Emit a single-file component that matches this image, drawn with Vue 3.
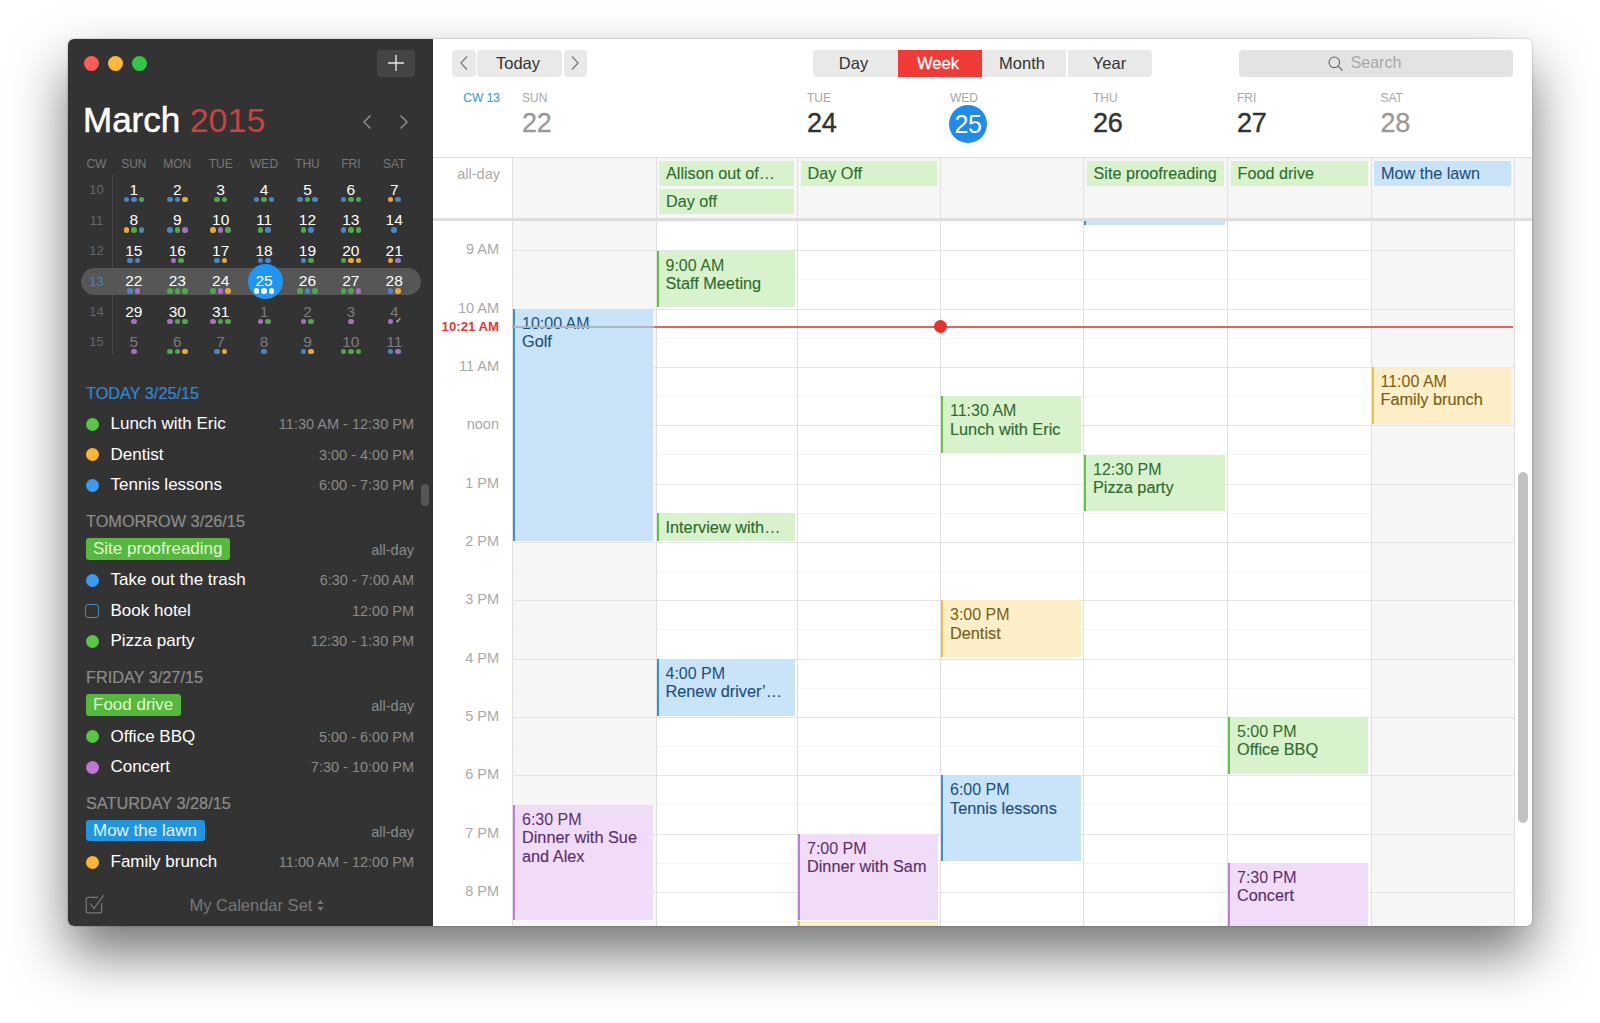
<template>
  <div class="page">
    <div class="window">
      <aside class="sidebar">
        <div class="titlebar">
          <span class="light red"></span>
          <span class="light yellow"></span>
          <span class="light green"></span>
          <button class="add">
            <svg width="16" height="16" viewBox="0 0 16 16"><path d="M8 0v16M0 8h16" stroke="#e6e6e6" stroke-width="1.4" fill="none" /></svg>
          </button>
        </div>
        <div class="month-row">
          <div class="month"><b>March</b> <span>2015</span></div>
          <div class="month-nav">
            <svg width="10" height="16" viewBox="0 0 10 16"><path d="M8.5 1.5 2 8l6.500 6.500" stroke="#8a8a8a" stroke-width="1.6" fill="none" /></svg>
            <svg width="10" height="16" viewBox="0 0 10 16"><path d="M1.500 1.500 8 8l-6.500 6.500" stroke="#8a8a8a" stroke-width="1.600" fill="none" /></svg>
          </div>
        </div>
        <div class="cal">
          <div class="cal-head">
            <span v-for="d in miniHead" :key="d">{{ d }}</span>
          </div>
          <div class="weeks">
            <div v-for="w in weeks" :key="w.cw" class="week" :class="{ current: w.cw === 13 }">
              <span class="cw">{{ w.cw }}</span>
              <div v-for="d in w.days" :key="d[0] + d[1]" class="cell" :class="{ muted: d[2], today: d[0] === 25 }">
                <span class="n">{{ d[0] }}</span>
                <span class="dots">
                  <i v-for="(c, i) in d[1]" :key="i" :class="'d-' + c"></i>
                </span>
              </div>
            </div>
          </div>
        </div>
        <div class="agenda">
          <section v-for="s in agenda" :key="s.head" class="sec">
            <h4 :class="{ now: s.today }">{{ s.head }}</h4>
            <div v-for="r in s.rows" :key="r.title" class="row">
              <span v-if="r.pill" class="pill" :class="r.pill">{{ r.title }}</span>
              <template v-else>
                <span class="marker" :class="r.kind"></span>
                <span class="row-title">{{ r.title }}</span>
              </template>
              <span class="row-time">{{ r.time }}</span>
            </div>
          </section>
        </div>
        <div class="side-foot">
          <svg class="tasks" width="22" height="22" viewBox="0 0 20 20" fill="none" stroke="#787878" stroke-width="1.100">
            <path d="M16 9v7.500a1.500 1.500 0 0 1-1.500 1.500h-11A1.500 1.500 0 0 1 2 16.500v-11A1.500 1.500 0 0 1 3.500 4H13" />
            <path d="M5.500 9.500 9 14l9-12" />
          </svg>
          <span class="set">My Calendar Set</span>
          <svg width="7" height="11" viewBox="0 0 7 11"><path d="M3.500 0 6.500 4H.5zM3.500 11 .5 7h6z" fill="#787878" /></svg>
        </div>
        <div class="side-thumb"></div>
      </aside>

      <main class="main">
        <div class="toolbar">
          <div class="nav">
            <button class="btn arrow">
              <svg width="8" height="14" viewBox="0 0 8 14"><path d="M7 .5.9 7 7 13.500" stroke="#777" stroke-width="1.200" fill="none" /></svg>
            </button>
            <button class="btn today-btn">Today</button>
            <button class="btn arrow">
              <svg width="8" height="14" viewBox="0 0 8 14"><path d="M1 .5 7.100 7 1 13.500" stroke="#777" stroke-width="1.200" fill="none" /></svg>
            </button>
          </div>
          <div class="tabs">
            <button class="tab">Day</button>
            <button class="tab active">Week</button>
            <button class="tab">Month</button>
            <button class="tab year">Year</button>
          </div>
          <div class="search">
            <svg width="15" height="15" viewBox="0 0 15 15" fill="none" stroke="#666" stroke-width="1.100">
              <circle cx="6.300" cy="6.300" r="5.300" />
              <path d="m10.200 10.200 4.300 4.300" />
            </svg>
            <span>Search</span>
          </div>
        </div>

        <div class="head grid-cols">
          <div class="cw-label">CW 13</div>
          <div v-for="d in days" :key="d.name" class="day-head" :class="{ off: d.off, cur: d.cur }">
            <template v-if="d.name">
              <div class="dn">{{ d.name }}</div>
              <div class="dnum">{{ d.num }}</div>
            </template>
          </div>
        </div>

        <div class="allday grid-cols">
          <div class="allday-label">all-day</div>
          <div v-for="(col, i) in allDay" :key="i" class="allday-col">
            <div v-for="c in col" :key="c.t" class="chip" :class="c.c">{{ c.t }}</div>
          </div>
        </div>

        <div class="body">
          <div class="timeline grid-cols">
            <div class="gutter">
              <div v-for="h in hours" :key="h" class="hour-label">{{ h }}</div>
              <div class="now-label">10:21 AM</div>
            </div>
            <div v-for="(col, i) in timed" :key="i" class="day-col" :class="{ weekend: i === 0 || i === 6 }">
              <div v-for="e in col" :key="e.start" class="event" :class="e.c" :style="place(e)">
                <div v-if="e.time" class="ev-time">{{ e.time }}</div>
                <div v-if="e.title" class="ev-title" :class="{ nowrap: !e.wrap, solo: !e.time }">{{ e.title }}</div>
              </div>
            </div>
            <div class="now-line">
              <span class="past"></span>
              <span class="ahead"><i></i></span>
            </div>
          </div>
          <div class="scroll-thumb"></div>
        </div>
      </main>
    </div>
  </div>
</template>

<script setup>
const HOUR = 58.33
const FIRST = 8

const miniHead = ['CW', 'SUN', 'MON', 'TUE', 'WED', 'THU', 'FRI', 'SAT']

const weeks = [
  { cw: 10, days: [[1, 'bbg'], [2, 'bbo'], [3, 'gg'], [4, 'bgb'], [5, 'bgb'], [6, 'bgg'], [7, 'ob']] },
  { cw: 11, days: [[8, 'ogb'], [9, 'bgp'], [10, 'opg'], [11, 'gb'], [12, 'gb'], [13, 'bgg'], [14, 'b']] },
  { cw: 12, days: [[15, 'bb'], [16, 'pg'], [17, 'bo'], [18, 'bb'], [19, 'bg'], [20, 'goo'], [21, 'op']] },
  { cw: 13, days: [[22, 'bp'], [23, 'ggg'], [24, 'gpo'], [25, 'www'], [26, 'gbg'], [27, 'ggp'], [28, 'bo']] },
  { cw: 14, days: [[29, 'p'], [30, 'pgg'], [31, 'pgg'], [1, 'pg', true], [2, 'pg', true], [3, 'p', true], [4, 'pc', true]] },
  { cw: 15, days: [[5, 'p', true], [6, 'ggo', true], [7, 'bo', true], [8, 'b', true], [9, 'bo', true], [10, 'ggg', true], [11, 'bp', true]] },
]

const agenda = [
  {
    head: 'TODAY 3/25/15',
    today: true,
    rows: [
      { title: 'Lunch with Eric', time: '11:30 AM - 12:30 PM', kind: 'green' },
      { title: 'Dentist', time: '3:00 - 4:00 PM', kind: 'orange' },
      { title: 'Tennis lessons', time: '6:00 - 7:30 PM', kind: 'blue' },
    ],
  },
  {
    head: 'TOMORROW 3/26/15',
    rows: [
      { title: 'Site proofreading', time: 'all-day', pill: 'p-green' },
      { title: 'Take out the trash', time: '6:30 - 7:00 AM', kind: 'blue' },
      { title: 'Book hotel', time: '12:00 PM', kind: 'task' },
      { title: 'Pizza party', time: '12:30 - 1:30 PM', kind: 'green' },
    ],
  },
  {
    head: 'FRIDAY 3/27/15',
    rows: [
      { title: 'Food drive', time: 'all-day', pill: 'p-green' },
      { title: 'Office BBQ', time: '5:00 - 6:00 PM', kind: 'green' },
      { title: 'Concert', time: '7:30 - 10:00 PM', kind: 'purple' },
    ],
  },
  {
    head: 'SATURDAY 3/28/15',
    rows: [
      { title: 'Mow the lawn', time: 'all-day', pill: 'p-blue' },
      { title: 'Family brunch', time: '11:00 AM - 12:00 PM', kind: 'orange' },
    ],
  },
]

const days = [
  { name: 'SUN', num: 22, off: true },
  { name: '', num: '' },
  { name: 'TUE', num: 24 },
  { name: 'WED', num: 25, cur: true },
  { name: 'THU', num: 26 },
  { name: 'FRI', num: 27 },
  { name: 'SAT', num: 28, off: true },
]

const allDay = [
  [],
  [{ t: 'Allison out of…', c: 'green' }, { t: 'Day off', c: 'green' }],
  [{ t: 'Day Off', c: 'green' }],
  [],
  [{ t: 'Site proofreading', c: 'green' }],
  [{ t: 'Food drive', c: 'green' }],
  [{ t: 'Mow the lawn', c: 'blue' }],
]

const hours = ['9 AM', '10 AM', '11 AM', 'noon', '1 PM', '2 PM', '3 PM', '4 PM', '5 PM', '6 PM', '7 PM', '8 PM']

const timed = [
  [
    { start: 10, end: 14, c: 'blue', time: '10:00 AM', title: 'Golf' },
    { start: 18.5, end: 20.5, c: 'purple', time: '6:30 PM', title: 'Dinner with Sue and Alex', wrap: true },
  ],
  [
    { start: 9, end: 10, c: 'green', time: '9:00 AM', title: 'Staff Meeting' },
    { start: 13.5, end: 14, c: 'green', title: 'Interview with…' },
    { start: 16, end: 17, c: 'blue', time: '4:00 PM', title: 'Renew driver’…' },
  ],
  [
    { start: 19, end: 20.5, c: 'purple', time: '7:00 PM', title: 'Dinner with Sam' },
    { start: 20.5, end: 21.5, c: 'yellow' },
  ],
  [
    { start: 11.5, end: 12.5, c: 'green', time: '11:30 AM', title: 'Lunch with Eric' },
    { start: 15, end: 16, c: 'yellow', time: '3:00 PM', title: 'Dentist' },
    { start: 18, end: 19.5, c: 'blue', time: '6:00 PM', title: 'Tennis lessons' },
  ],
  [
    { start: 7.5, end: 8.58, c: 'blue' },
    { start: 12.5, end: 13.5, c: 'green', time: '12:30 PM', title: 'Pizza party' },
  ],
  [
    { start: 17, end: 18, c: 'green', time: '5:00 PM', title: 'Office BBQ' },
    { start: 19.5, end: 22, c: 'purple', time: '7:30 PM', title: 'Concert' },
  ],
  [
    { start: 11, end: 12, c: 'yellow', time: '11:00 AM', title: 'Family brunch' },
  ],
]

const place = (e) => ({
  top: `${(e.start - FIRST) * HOUR}px`,
  height: `${(e.end - e.start) * HOUR - 1.5}px`,
})
</script>

<style>
html, body {
  margin: 0;
  background: #fff;
  overflow: hidden;
}
</style>

<style scoped>
.page {
  box-sizing: border-box;
  width: 1600px;
  height: 1023px;
  padding: 39px 0 0 68px;
  overflow: hidden;
  font-family: "Liberation Sans", Arial, sans-serif;
}

.window {
  position: relative;
  display: flex;
  width: 1464px;
  height: 887px;
  border-radius: 6px;
  overflow: hidden;
  background: #fff;
}

.page::before {
  content: "";
  position: absolute;
  left: 68px;
  top: 39px;
  width: 1464px;
  height: 887px;
  border-radius: 6px;
  box-shadow: 0 28px 55px rgba(0, 0, 0, 0.55), 0 0 2px rgba(0, 0, 0, 0.35);
}

/* sidebar */
.sidebar {
  position: relative;
  display: flex;
  flex-direction: column;
  flex: 0 0 365px;
  background: #333;
  color: #fff;
}
.sidebar > * {
  flex-shrink: 0;
}

.titlebar {
  display: flex;
  align-items: center;
  gap: 9px;
  height: 26.5px;
  margin-top: 11px;
  padding: 0 18px 0 16px;
}

.light {
  width: 15px;
  height: 15px;
  border-radius: 50%;
}
.light.red { background: #fc5b57; }
.light.yellow { background: #fdb93a; }
.light.green { background: #32c648; }

.add {
  display: flex;
  align-items: center;
  justify-content: center;
  width: 38px;
  height: 26.5px;
  margin-left: auto;
  padding: 0;
  border: 0;
  border-radius: 4px;
  background: #444;
}

.month-row {
  display: flex;
  align-items: center;
  justify-content: space-between;
  height: 50px;
  margin-top: 18.5px;
  padding: 0 24px 0 15px;
}

.month {
  font-size: 34px;
  line-height: 40px;
}
.month b {
  font-size: 35px;
  font-weight: 400;
  -webkit-text-stroke: 0.5px #fff;
}
.month span {
  color: #c9423e;
}

.month-nav {
  display: flex;
  gap: 27px;
  margin-top: 4px;
}

.cal {
  margin: 8.7px 12px 0 12.7px;
}

.cal-head,
.week {
  display: grid;
  grid-template-columns: 31.500px repeat(7, 43.4px);
  align-items: center;
}

.cal-head {
  height: 20px;
  font-size: 12px;
  color: #777;
  text-align: center;
}

.weeks {
  position: relative;
  margin-top: 1.1px;
}
.weeks::before {
  content: "";
  position: absolute;
  left: 31px;
  top: 0;
  bottom: 2px;
  width: 1px;
  background: #454545;
}

.week {
  position: relative;
  height: 30.4px;
  text-align: center;
}
.week.current {
  height: 27px;
  margin: 1.7px 0;
  border-radius: 14px;
  background: #565656;
}

.cw {
  font-size: 13px;
  color: #666;
}
.current .cw {
  color: #3d87b8;
}

.cell {
  position: relative;
  display: flex;
  align-items: center;
  justify-content: center;
  height: 100%;
  font-size: 15.500px;
}
.cell .n {
  position: relative;
}
.cell.muted {
  color: #7b7b7b;
}
.cell.today::before {
  content: "";
  position: absolute;
  left: 5.200px;
  top: -4px;
  width: 35px;
  height: 35px;
  border-radius: 50%;
  background: #1f96f3;
}

.dots {
  position: absolute;
  left: 0;
  right: 0;
  top: calc(50% + 7px);
  display: flex;
  justify-content: center;
  gap: 2px;
}
.dots i {
  width: 5.500px;
  height: 5.500px;
  border-radius: 50%;
}
.d-b { background: #4a86c2; }
.d-g { background: #4fa84a; }
.d-o { background: #e6a93a; }
.d-p { background: #a870c2; }
.d-w { background: #fff; }
.d-c { position: relative; }
.d-c::after {
  content: "✓";
  position: absolute;
  left: 0;
  top: -2px;
  font: normal 8px/8px "DejaVu Sans", sans-serif;
  color: #fff;
}

.agenda {
  margin-top: 26.300px;
  padding: 0 19px 0 17px;
}

.sec {
  margin-bottom: 10.600px;
}
.sec:last-child {
  margin-bottom: 0;
}

.sec h4 {
  margin: 0 0 3.500px 1px;
  font-size: 16.300px;
  font-weight: 400;
  line-height: 20px;
  color: #8c8c8c;
  -webkit-text-stroke: 0.2px currentColor;
}
.sec h4.now {
  margin-bottom: 5.700px;
  color: #2f88d8;
}

.row {
  display: flex;
  align-items: center;
  height: 30.500px;
}

.marker {
  flex: none;
  box-sizing: border-box;
  width: 13px;
  height: 13px;
  margin: 0 12px 0 0.500px;
  border-radius: 50%;
}
.marker.green { background: #5ac544; }
.marker.orange { background: #fbb635; }
.marker.blue { background: #3a9bf2; }
.marker.purple { background: #c273d8; }
.marker.task {
  width: 14px;
  height: 14px;
  margin: 0 11.500px 0 0;
  border: 1.500px solid #4a90c8;
  border-radius: 3px;
}

.row-title {
  font-size: 17px;
}

.row-time {
  margin-left: auto;
  font-size: 14.500px;
  color: #8a8a8a;
}

.pill {
  display: inline-flex;
  align-items: center;
  height: 21.500px;
  margin: -2px 0 0 1px;
  padding: 0 8px 0 7px;
  border-radius: 3px;
  font-size: 17px;
}
.p-green {
  background: #55b93c;
  color: #e4f7d8;
}
.p-blue {
  background: #2196e0;
  color: #e4f3ff;
}

.side-foot {
  display: flex;
  align-items: center;
  height: 42px;
  margin-top: auto;
  padding-left: 16px;
  color: #777;
}
.tasks {
  margin-top: -2px;
}
.set {
  margin: 0 5px 0 83.500px;
  font-size: 16.500px;
}

.side-thumb {
  position: absolute;
  left: 352.500px;
  top: 445px;
  width: 8px;
  height: 22px;
  border-radius: 4px;
  background: #555;
}

/* main */
.main {
  display: flex;
  flex-direction: column;
  flex: 1;
  min-width: 0;
  color: #333;
}

.toolbar {
  display: flex;
  flex: none;
  height: 26.500px;
  margin-top: 11px;
  padding: 0 19px;
}

.nav {
  display: flex;
  gap: 1.500px;
}

.btn,
.tab {
  height: 100%;
  padding: 0;
  border: 0;
  background: #e9e9e9;
  font: 16.500px "Liberation Sans", Arial, sans-serif;
  color: #333;
}
.btn {
  border-radius: 4px;
}
.arrow {
  display: flex;
  align-items: center;
  justify-content: center;
  width: 23.500px;
}
.today-btn {
  width: 85px;
  padding-right: 3px;
}

.tabs {
  display: flex;
  margin-left: 226px;
  border-radius: 4px;
  overflow: hidden;
}
.tab {
  width: 84px;
  padding-right: 4px;
}
.tab:first-child {
  width: 85px;
}
.tab.active {
  background: #f03a35;
  color: #fff;
  -webkit-text-stroke: 0.3px #fff;
}
.tab.year {
  margin-left: 1.500px;
  padding-right: 0;
}

.search {
  display: flex;
  align-items: center;
  justify-content: center;
  box-sizing: border-box;
  gap: 8px;
  width: 274px;
  margin-left: auto;
  padding-right: 23px;
  border-radius: 4px;
  background: #e3e3e3;
  font-size: 16px;
  color: #a8a8a8;
}

.grid-cols {
  display: grid;
  grid-template-columns: 79px 143.500px 141.500px 143px 143px 144px 143.500px 144px 1fr;
}

.head {
  flex: none;
  height: 81.500px;
  border-bottom: 1px solid #dcdcdc;
  box-sizing: border-box;
}

.cw-label {
  padding: 14.500px 12px 0 0;
  font-size: 12px;
  line-height: 14px;
  text-align: right;
  color: #46a5d8;
  -webkit-text-stroke: 0.2px #46a5d8;
}

.day-head {
  padding: 14.500px 0 0 10px;
}
.dn {
  font-size: 12px;
  line-height: 14px;
  color: #a8a8a8;
}
.dnum {
  margin-top: 3.200px;
  font-size: 27px;
  line-height: 30px;
  letter-spacing: -0.3px;
  color: #333;
  -webkit-text-stroke: 0.4px currentColor;
}
.day-head.off .dnum {
  color: #999;
  -webkit-text-stroke: 0.3px currentColor;
}
.day-head.cur .dnum {
  width: 38px;
  height: 38px;
  margin: 0 0 0 -1px;
  border-radius: 50%;
  background: #1f8bea;
  font-size: 25px;
  line-height: 38px;
  text-align: center;
  color: #fff;
  -webkit-text-stroke: 0;
}

.allday {
  flex: none;
  box-sizing: border-box;
  height: 62.500px;
  border-bottom: 3px solid #dedede;
  background: linear-gradient(to right, #fff 79px, #f6f6f6 79px);
}
.allday-label {
  padding: 8px 12px 0 0;
  font-size: 14.500px;
  line-height: 16px;
  text-align: right;
  color: #aaa;
}
.allday-col {
  display: flex;
  flex-direction: column;
  gap: 2.700px;
  padding: 3px 3px 0 2.500px;
  border-left: 1px solid #e0e0e0;
  min-width: 0;
}
.allday-col:last-child {
  border-right: 1px solid #e0e0e0;
}
.chip {
  height: 25.300px;
  padding-left: 7px;
  font-size: 16.200px;
  line-height: 25.300px;
  white-space: nowrap;
  overflow: hidden;
  -webkit-text-stroke: 0.1px currentColor;
}

.green { background: #d8f2cd; color: #2f6b2c; }
.blue { background: #c9e4f9; color: #1d4f7d; }
.yellow { background: #fcefc8; color: #7a5d14; }
.purple { background: #f0dcf6; color: #5b2f6c; }

.body {
  position: relative;
  flex: 1;
  min-height: 0;
  overflow: hidden;
}

.timeline {
  position: relative;
  height: 758px;
  margin-top: -28.330px;
}

.gutter {
  position: relative;
  padding-top: 28.300px;
}
.hour-label {
  height: 58.330px;
  padding-right: 13px;
  font-size: 14.500px;
  line-height: 58.330px;
  text-align: right;
  color: #aaa;
}
.now-label {
  position: absolute;
  right: 13px;
  top: 126px;
  font-size: 13.200px;
  font-weight: 700;
  line-height: 18px;
  color: #e23b36;
}

.day-col {
  position: relative;
  border-left: 1px solid #dfdfdf;
  background-image: repeating-linear-gradient(
    to bottom,
    #e4e4e4 0,
    #e4e4e4 1px,
    transparent 1px,
    transparent 29.160px,
    #f5f5f5 29.160px,
    #f5f5f5 30.160px,
    transparent 30.160px,
    transparent 58.330px
  );
}
.day-col:nth-last-child(2) {
  border-right: 1px solid #dfdfdf;
}
.day-col.weekend {
  background-color: #f6f6f6;
}

.event {
  position: absolute;
  left: 0;
  right: 2.500px;
  box-sizing: border-box;
  padding: 6px 2px 0 7px;
  border-left: 2.500px solid;
  font-size: 16px;
  line-height: 18.700px;
  overflow: hidden;
}
.event.green { border-left-color: #66c04a; }
.event.blue { border-left-color: #3f92c8; }
.event.yellow { border-left-color: #edc050; }
.event.purple { border-left-color: #bb7ed2; }

.ev-title {
  margin-top: -1.500px;
  font-size: 16.300px;
  -webkit-text-stroke: 0.15px currentColor;
}
.ev-title.solo {
  margin-top: -0.500px;
}
.ev-title.nowrap {
  white-space: nowrap;
}

.now-line {
  position: absolute;
  left: 79px;
  right: 19px;
  top: 134.300px;
  display: flex;
  height: 1.500px;
  pointer-events: none;
}
.past {
  width: 142px;
  background: #a9b5bf;
}
.ahead {
  position: relative;
  flex: 1;
  background: #e2625e;
}
.ahead i {
  position: absolute;
  left: 280px;
  top: -6px;
  width: 13px;
  height: 13px;
  border-radius: 50%;
  background: #e5322d;
}

.scroll-thumb {
  position: absolute;
  right: 4px;
  top: 251px;
  width: 10px;
  height: 351px;
  border-radius: 5px;
  background: #c2c2c2;
}
</style>
